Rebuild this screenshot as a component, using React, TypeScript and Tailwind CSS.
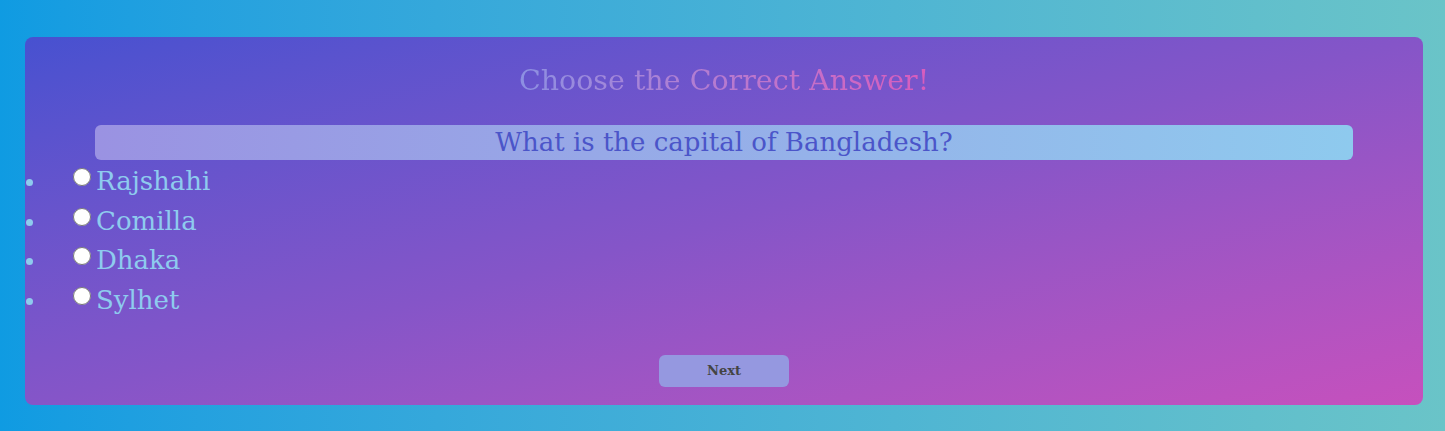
import React from 'react'

const options = ['Rajshahi', 'Comilla', 'Dhaka', 'Sylhet']

export default function App() {
  return (
    <div className="min-h-[431px] w-full bg-linear-to-r from-[#0f9be2] to-[#6ac4c8] pl-[25px] pr-[22px] pt-[37px] pb-[26px] font-['DejaVu_Serif',serif]">
      <div className="h-[368px] rounded-lg bg-linear-to-br from-[#4751d0] via-[#8555c8] to-[#c650bd] pt-[24px]">
        <h1 className="text-center text-[28.5px] leading-[40px]">
          <span className="bg-linear-to-r from-[#8c90e2] to-[#d85cbd] bg-clip-text text-transparent">
            Choose the Correct Answer!
          </span>
        </h1>

        <div className="mx-[70px] mt-[24px] flex h-[35px] items-center justify-center rounded-md bg-linear-to-r from-[#9a92e2] to-[#8ecaee] text-[26px] text-[#4b55c9]">
          What is the capital of Bangladesh?
        </div>

        <ul className="mt-[2px] text-[26px] leading-[39.5px] text-[#8ecbee]">
          {options.map((o) => (
            <li key={o} className="flex h-[39.5px] items-start">
              <span className="mt-[17px] ml-[1px] h-[7px] w-[7px] shrink-0 rounded-full bg-[#8ecbee]" />
              <label className="ml-[40px] flex items-start">
                <input type="radio" name="answer" className="m-0 mt-[6px] h-[18px] w-[18px] mr-[5px]" />
                <span>{o}</span>
              </label>
            </li>
          ))}
        </ul>

        <div className="mt-[35px] flex justify-center">
          <button className="h-[32px] w-[130px] rounded-md bg-[#9598e0] text-[13px] font-bold text-[#444]">
            Next
          </button>
        </div>
      </div>
    </div>
  )
}
